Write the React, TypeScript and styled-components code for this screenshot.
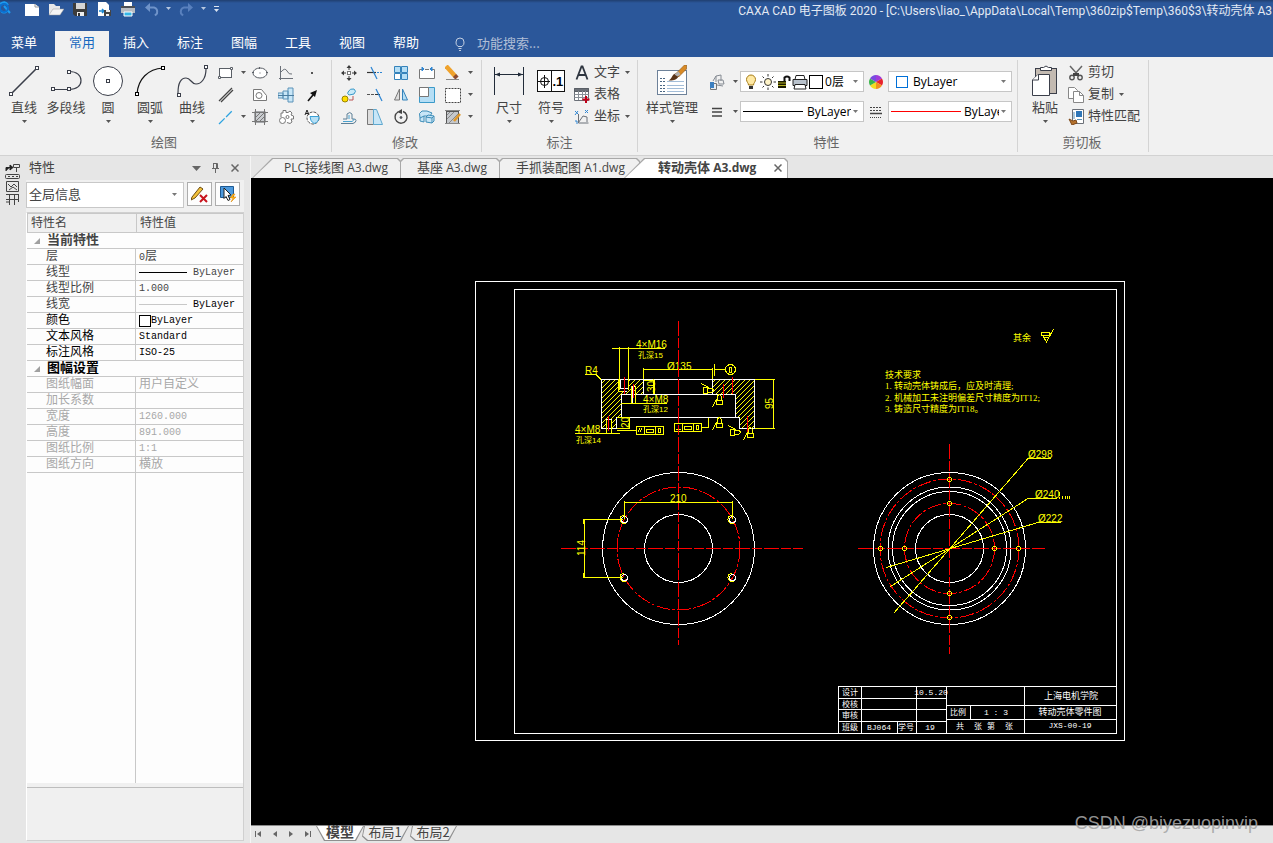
import React from "react";
import styled, { createGlobalStyle, css } from "styled-components";

const ui = `"Noto Sans CJK SC", sans-serif`;
const latinUi = `"Open Sans", "Noto Sans CJK SC", sans-serif`;

const GlobalStyle = createGlobalStyle`
  * { box-sizing: border-box; }
  body { margin: 0; background: #e6e6e6; font-family: ${ui}; font-size: 13px; color: #444; }
  button, select, input { font: inherit; color: inherit; margin: 0; padding: 0; border: 0; background: none; }
  button { cursor: default; white-space: nowrap; }
`;

/* ---------- shell ---------- */

const Window = styled.div`
  position: relative;
  display: flex;
  flex-direction: column;
  min-height: 100vh;
  overflow: hidden;
`;

const Header = styled.header`
  background: linear-gradient(#203f70, #2b579a 3px);
  color: #fff;
`;

const TitleBar = styled.div`
  display: flex;
  align-items: flex-start;
  height: 31px;
  overflow: hidden;
`;

const QuickAccess = styled.div`
  display: flex;
  align-items: center;
  height: 18px;
  flex: none;
`;

const QuickButton = styled.button<{ $w?: number }>`
  display: flex;
  align-items: center;
  justify-content: center;
  width: ${(p) => p.$w ?? 24}px;
  height: 18px;
  flex: none;
`;

const Han = styled.span`
  font-family: ${ui};
  font-size: 13px;
`;

const WindowTitle = styled.div`
  margin-left: auto;
  padding-right: 1px;
  flex: none;
  white-space: nowrap;
  line-height: 22px;
  font-size: 12px;
  font-family: Roboto, "Noto Sans CJK SC", sans-serif;
  color: #e3e9f3;
`;

const MenuBar = styled.nav`
  display: flex;
  height: 26px;
`;

const MenuTab = styled.button<{ $active?: boolean; $first?: boolean }>`
  width: ${(p) => (p.$first ? 48 : 54)}px;
  margin-right: ${(p) => (p.$first ? 7 : 0)}px;
  padding-bottom: 4px;
  line-height: 20px;
  text-align: center;
  background: ${(p) => (p.$active ? "#f1f1f1" : "transparent")};
  color: ${(p) => (p.$active ? "#1769c0" : "#fff")};
`;

const Search = styled.label`
  display: flex;
  align-items: center;
  gap: 10px;
  padding-left: 20px;
`;

const SearchInput = styled.input`
  width: 120px;
  padding-bottom: 4px;
  outline: none;
  &::placeholder { color: #b1bfd6; opacity: 1; }
`;

/* ---------- ribbon ---------- */

const Ribbon = styled.div`
  display: flex;
  height: 99px;
  padding-top: 3px;
  background: #f1f1f1;
  border-bottom: 1px solid #d2d2d2;
`;

const Group = styled.section<{ $pl: number; $pr: number }>`
  display: flex;
  flex-direction: column;
  flex: none;
  height: 92px;
  padding: 0 ${(p) => p.$pr}px 0 ${(p) => p.$pl}px;
  border-right: 1px solid #d4d4d4;
`;

const GroupBody = styled.div`
  display: flex;
  height: 72px;
`;

const GroupLabel = styled.div`
  text-align: center;
  line-height: 20px;
  color: #666;
`;

const BigButton = styled.button<{ $w?: number }>`
  display: flex;
  flex-direction: column;
  align-items: center;
  width: ${(p) => p.$w ?? 42}px;
  padding-top: 5px;
  flex: none;
  line-height: 20px;
`;

const BigLabel = styled.span`
  margin-bottom: 3px;
`;

const SmallGrid = styled.div<{ $pl?: number }>`
  display: flex;
  flex-direction: column;
  padding-top: 2px;
  padding-left: ${(p) => p.$pl ?? 0}px;
`;

const SmallRow = styled.div`
  display: flex;
  height: 22px;
`;

const SmallButton = styled.button<{ $arrow?: boolean }>`
  display: flex;
  align-items: center;
  justify-content: center;
  width: ${(p) => (p.$arrow ? 8 : 26)}px;
  height: 22px;
`;

const TextButton = styled.button`
  display: flex;
  align-items: center;
  height: 22px;
  gap: 4px;
`;

const TextLabel = styled.span`
  line-height: 18px;
  padding-bottom: 4px;
`;

const PropRows = styled.div`
  display: flex;
  flex-direction: column;
  gap: 9px;
  padding-top: 11px;
`;

const PropRow = styled.div`
  display: flex;
  align-items: center;
  height: 21px;
`;

const IconCell = styled.button<{ $w: number }>`
  display: flex;
  align-items: center;
  justify-content: center;
  width: ${(p) => p.$w}px;
`;

const Combo = styled.div<{ $w: number }>`
  display: flex;
  align-items: center;
  width: ${(p) => p.$w}px;
  height: 21px;
  border: 1px solid #c6c6c6;
  background: #fff;
  padding: 0 4px 0 2px;
  gap: 1px;
`;

const ComboSelect = styled.select<{ $pl?: number }>`
  appearance: none;
  flex: 1;
  min-width: 0;
  height: 19px;
  padding-left: ${(p) => p.$pl ?? 0}px;
  outline: none;
  color: #000;
  font-family: ${latinUi};
  font-size: 12px;
`;

const Swatch = styled.span<{ $blue?: boolean; $size: number }>`
  flex: none;
  width: ${(p) => p.$size}px;
  height: ${(p) => p.$size}px;
  margin-left: ${(p) => (p.$blue ? 5 : 0)}px;
  border: 1px solid ${(p) => (p.$blue ? "#0070d8" : "#000")};
  background: #fff;
`;

const LineSample = styled.span<{ $w: number; $color: string }>`
  flex: none;
  width: ${(p) => p.$w}px;
  height: 1px;
  background: ${(p) => p.$color};
`;

/* ---------- workspace ---------- */

const Workspace = styled.div`
  display: flex;
  flex: 1;
  min-height: 687px;
`;

const DockStrip = styled.aside`
  display: flex;
  justify-content: center;
  align-items: flex-start;
  width: 25px;
  flex: none;
  padding-top: 7px;
  background: #e6e6e6;
`;

const Panel = styled.aside`
  display: flex;
  flex-direction: column;
  width: 226px;
  flex: none;
  padding: 0 6px 2px 1px;
  background: #e6e6e6;
  border-right: 1px solid #f5f5f5;
`;

const PanelTitle = styled.div`
  display: flex;
  align-items: center;
  height: 24px;
  padding: 0 0 0 3px;
`;

const PanelTitleText = styled.h2`
  flex: 1;
  margin: 0;
  padding-bottom: 3px;
  line-height: 20px;
  font-size: 13px;
  font-weight: 400;
`;

const PanelTool = styled.button`
  display: flex;
  justify-content: center;
  width: 19px;
`;

const PanelBar = styled.div`
  display: flex;
  gap: 3px;
  padding: 2px 0 4px;
  background: #f0f0f0;
`;

const ScopeCombo = styled.div`
  display: flex;
  align-items: center;
  width: 158px;
  height: 26px;
  padding: 0 5px 0 2px;
  border: 1px solid #c8c8c8;
  background: #fff;
`;

const ScopeSelect = styled.select`
  appearance: none;
  flex: 1;
  min-width: 0;
  padding-bottom: 4px;
  outline: none;
`;

const BarButton = styled.button`
  display: flex;
  align-items: center;
  justify-content: center;
  width: 25px;
  height: 24px;
  border: 1px solid #adadad;
  background: #fdfdfd;
`;

const Sheet = styled.div`
  display: flex;
  flex-direction: column;
  flex: 1;
  border: 1px solid #d0d0d0;
  border-left: 1px solid #fff;
  background: #f0f0f0;
`;

const GridArea = styled.div`
  flex: 1;
  display: flex;
  flex-direction: column;
  margin-bottom: 4px;
  background: #fdfdfd;
`;

const PropTable = styled.table`
  width: 100%;
  table-layout: fixed;
  border-collapse: separate;
  border-spacing: 0;
  font-family: "Liberation Mono", "Noto Sans CJK SC", monospace;
  font-size: 12px;
`;

const HeadCell = styled.th<{ $w?: number }>`
  width: ${(p) => (p.$w ? `${p.$w}px` : "auto")};
  height: 20px;
  padding: 2px 3px 0;
  line-height: 16px;
  font-weight: 400;
  text-align: left;
  background: #f0f0f0;
  border: 1px solid #c8c8c8;
  border-right: 0;
`;

type Tone = "normal" | "strong" | "muted";
const toneColor: Record<Tone, string> = { normal: "#444", strong: "#000", muted: "#a8a8a8" };

const GroupCell = styled.td<{ $tone: Tone }>`
  height: 16px;
  padding: 0 0 0 7px;
  line-height: 15px;
  font-weight: 700;
  font-size: 13px;
  color: ${(p) => toneColor[p.$tone]};
  border-bottom: 1px solid #c8c8c8;
`;

const GroupInner = styled.span`
  display: flex;
  align-items: center;
  gap: 7px;
  height: 15px;
`;

const cell = css<{ $tone: Tone }>`
  height: 16px;
  line-height: 15px;
  font-weight: 400;
  text-align: left;
  white-space: nowrap;
  color: ${(p) => toneColor[p.$tone]};
  border-bottom: 1px solid #c8c8c8;
`;

const NameCell = styled.th<{ $tone: Tone }>`
  ${cell}
  padding: 0 0 0 19px;
  border-right: 1px solid #c8c8c8;
`;

const ValueCell = styled.td<{ $tone: Tone }>`
  ${cell}
  padding: 0 0 0 3px;
`;

const ValueInner = styled.span<{ $text?: boolean }>`
  display: flex;
  align-items: center;
  height: 15px;
  padding-top: ${(p) => (p.$text ? 2 : 0)}px;
`;

const Mono = styled.span<{ $strong?: boolean }>`
  font-size: 10px;
  color: ${(p) => (p.$strong ? "#000" : "inherit")};
`;

const ColumnTail = styled.div`
  flex: 1;
  width: 109px;
  border-right: 1px solid #c8c8c8;
`;

const Description = styled.div`
  height: 53px;
  border-top: 1px solid #bdbdbd;
`;

const Documents = styled.main`
  display: flex;
  flex-direction: column;
  flex: 1;
  min-width: 0;
`;

const DocTabs = styled.div`
  display: flex;
  align-items: flex-end;
  height: 22px;
  padding-left: 1px;
  background: #e6e6e6;
`;

const DocTab = styled.div<{ $w: number; $active?: boolean; $slant: number; $overlap?: number }>`
  position: relative;
  isolation: isolate;
  display: flex;
  align-items: center;
  width: ${(p) => p.$w}px;
  height: 20px;
  margin-left: ${(p) => -(p.$overlap ?? 0)}px;
  flex: none;
  &::before, &::after {
    content: "";
    position: absolute;
    z-index: -1;
    inset: 0;
    background: #a8a8a8;
    clip-path: polygon(${(p) => p.$slant}px 0, calc(100% - 3px) 0, 100% 3px, 100% 100%, 0 100%, 0 ${(p) => (p.$slant > 5 ? "100%" : "3px")});
  }
  &::after {
    inset: 1px 1px 0 1px;
    background: ${(p) => (p.$active ? "#fff" : "#f0f0f0")};
  }
`;

const DocLink = styled.button<{ $pl: number; $active?: boolean }>`
  padding: 0 0 2px ${(p) => p.$pl}px;
  line-height: 18px;
  font-family: ${latinUi};
  font-size: 12px;
  font-weight: ${(p) => (p.$active ? 700 : 400)};
`;

const CloseTab = styled.button`
  display: flex;
  margin-left: auto;
  margin-right: 6px;
`;

const Canvas = styled.div`
  flex: 1;
  min-height: 0;
  background: #000;
  overflow: hidden;
`;

const Drawing = styled.svg`
  display: block;
  width: 100%;
  height: auto;
  shape-rendering: crispEdges;
  fill: none;
`;

const LayoutBar = styled.div`
  display: flex;
  height: 18px;
  background: #e6e6e6;
  border-top: 1px solid #8a8a8a;
`;

const NavButton = styled.button`
  display: flex;
  align-items: center;
  justify-content: center;
  width: 16px;
  height: 16px;
  flex: none;
`;

const LayoutTabs = styled.div`
  display: flex;
  padding-left: 1px;
`;

const LayoutTab = styled.button<{ $active?: boolean; $tuck?: boolean }>`
  position: relative;
  isolation: isolate;
  width: 48px;
  height: 15px;
  margin-left: ${(p) => (p.$tuck ? -3 : 0)}px;
  padding-bottom: 4px;
  line-height: 11px;
  text-align: center;
  font-weight: ${(p) => (p.$active ? 700 : 400)};
  font-size: ${(p) => (p.$active ? 14 : 13)}px;
  &::before, &::after {
    content: "";
    position: absolute;
    z-index: -1;
    inset: 0;
    background: #8f8f8f;
    clip-path: ${(p) =>
      p.$active
        ? "polygon(0 0, 100% 0, calc(100% - 8px) 100%, 8px 100%)"
        : "polygon(3px 0, 100% 0, calc(100% - 8px) 100%, 6px 100%, 1px 70%)"};
  }
  &::after {
    inset: 0 1px 1px 1px;
    background: ${(p) => (p.$active ? "#fff" : "#ececec")};
  }
`;

const Watermark = styled.div`
  position: absolute;
  right: 15px;
  bottom: 9px;
  font-family: "Liberation Sans", sans-serif;
  font-size: 18px;
  line-height: 22px;
  color: rgba(165, 165, 165, 0.9);
`;

/* ---------- icons ---------- */

const Glyph = styled.svg`
  display: block;
  flex: none;
  fill: none;
  stroke: #5a5f66;
  stroke-width: 1;
`;

const I = ({ s = 16, children }: { s?: number; children: React.ReactNode }) => (
  <Glyph width={s} height={s} viewBox={`0 0 ${s} ${s}`} aria-hidden="true">{children}</Glyph>
);

const Arrow = ({ color = "#555" }: { color?: string }) => (
  <Glyph width="7" height="4" viewBox="0 0 7 4" aria-hidden="true">
    <path d="M1 0h5L3.5 3z" fill={color} stroke="none" />
  </Glyph>
);

const Node = ({ x, y, c = "#3b3f4a" }: { x: number; y: number; c?: string }) => (
  <rect x={x - 1.5} y={y - 1.5} width="3" height="3" fill="#fff" stroke={c} />
);

const big = {
  line: <I s={32}><path d="M3 29 29 3" stroke="#3b3f4a" strokeWidth="1.6" /><Node x={3} y={29} /><Node x={29} y={3} /></I>,
  polyline: <I s={32}><path d="M3 24h16c8 0 12-4 12-9s-4-9-12-9" transform="translate(0 .5)" stroke="#3b3f4a" strokeWidth="1.2" /><Node x={3} y={24} /><Node x={19} y={24} /><Node x={19} y={7} /></I>,
  circle: <I s={32}><circle cx="16" cy="16" r="14.5" fill="#fff" stroke="#3b3f4a" /><Node x={16} y={16} /></I>,
  arc: <I s={32}><path d="M3 29C4 14 14 4 29 3" stroke="#111" strokeWidth="1.2" /><Node x={3} y={29} c="#000" /><Node x={29} y={3} c="#000" /></I>,
  curve: <I s={32}><path d="M2 28C2 18 5 13 10 13s5 6 10 6S30 14 30 4" stroke="#3b3f4a" strokeWidth="1.2" /><Node x={3} y={30} /><Node x={30} y={2} /></I>,
  dim: <I s={32}><path d="M1.5 2v28M30.5 2v28M2 9.5h28" stroke="#222c3a" /><path d="M2 9.5l5-2v4zM30 9.5l-5-2v4z" fill="#222c3a" stroke="none" /></I>,
  symbol: (
    <I s={32}>
      <rect x="2.5" y="5.5" width="27" height="21" fill="#fff" stroke="#111" />
      <path d="M16.5 5.5v21M3 16.5h12M9.5 10v13" stroke="#111" />
      <circle cx="9.5" cy="16.5" r="4" stroke="#111" />
      <text x="17.5" y="21" fill="#000" stroke="none" fontSize="13" fontWeight="700" fontFamily="Liberation Sans">.1</text>
    </I>
  ),
  style: (
    <I s={32}>
      <rect x="1.5" y="5.5" width="29" height="24" fill="#fff" stroke="#6d8199" />
      <path d="M4 13.5h5M4 16.5h5M4 20.5h5M4 23.5h5M4 26.5h5" stroke="#4a6784" strokeDasharray="2 1" />
      <path d="M11 16.5h17M11 20.5h17M11 23.5h17M11 26.5h17" stroke="#a3bdd8" />
      <path d="M30.5 0v4l-8 8-3-3 9-9z" fill="#d98a25" stroke="#8a5413" strokeWidth=".6" />
      <path d="m19.5 8.5 3 3c-2 4-6 4-10 4 4-2 3-6 7-7z" fill="#5a3417" stroke="none" />
      <path d="m18.5 9.5 4-3 2 3-3 2z" fill="#b0b0b0" stroke="none" />
    </I>
  ),
  paste: (
    <I s={32}>
      <rect x="6.5" y="3.5" width="21" height="25" fill="#c3bab1" stroke="#3b3f4a" />
      <path d="M11.5 5.5v-3h3q2.5-3 5 0h3v3z" fill="#fff" stroke="#3b3f4a" />
      <path d="M9 9.5h11.5v21h-17V15z" fill="#fff" stroke="#3b3f4a" />
      <path d="M9.5 9.5V15h-6" fill="#fff" stroke="#3b3f4a" />
    </I>
  ),
};

const P = {
  rect: <I><rect x="1.5" y="3.5" width="12" height="9" fill="#fff" /><path d="M.5 11.5h2v2h-2zM12.5 2.5h2v2h-2z" fill="#fff" /></I>,
  ellipse: <I><ellipse cx="8" cy="8" rx="7" ry="5" fill="#fff" /><path d="M0 7.5h2M14 7.5h2M7.5 8h1M7.5 2v2" /></I>,
  chart: <I><path d="M2.5 1v14M1 13.5h14M3 7q4-5 6-1 2 4 5 3" stroke="#6b7078" /></I>,
  dot: <I><path d="M7 7h2v2H7z" fill="#555" stroke="none" /></I>,
  parallel: <I><path d="M1 14 14 1M3 15 15 3" stroke="#444" strokeWidth="1.3" /></I>,
  holeplate: <I><path d="M1.5 2.5h8l5 6v5h-13z" fill="#fff" stroke="#777" /><circle cx="7" cy="8.5" r="3" stroke="#777" /></I>,
  shaft: <I><path d="M0 6h5v5H0zM5 4h5v8H5zM10 1h5v14h-5z" fill="#c8e6f7" stroke="#5a92b8" /><path d="M0 8.5h16" stroke="#4a7c9f" /></I>,
  arrow: <I><path d="m4 14 5-6" stroke="#111" strokeWidth="1.6" /><path d="m13 3-2 7-5-4z" fill="#111" stroke="none" /></I>,
  dashline: <I><path d="M1 15 15 1" stroke="#2da3e0" strokeWidth="1.3" strokeDasharray="8 2" /></I>,
  hatch: <I><rect x="3" y="3" width="10" height="10" fill="#c9ccd0" /><path d="M0 3.5h16M0 12.5h16M3.5 0v16M12.5 0v16M4 12l8-8M4 8l4-4M8 12l4-4" stroke="#777" /></I>,
  gear: <I><path d="M3 8V4h2V1.5h3v2h2l2-1.5 2 2-1 2 2.5 1v3H13l1 3-2 1.5-3-1" stroke="#777" fill="#fff" /><circle cx="4.5" cy="11.5" r="3" stroke="#777" fill="#fff" /><circle cx="9.5" cy="8" r="1.5" stroke="#777" /></I>,
  rotcircle: <I><circle cx="9" cy="9" r="6" fill="#fff" stroke="#555" strokeDasharray="3 1" /><path d="M6 7.5h9q0 6-5 7-4-2-4-7z" fill="#b7e0f5" stroke="#3ba1d6" /><path d="m1 6 2-5 2 5M2 4.5h2" stroke="#222" /></I>,
  move: <I><path d="M8 1v4M8 11v4M1 8h4M11 8h4" stroke="#3a3a3a" /><path d="M8 0l2.5 3h-5zM8 16l2.5-3h-5zM0 8l3-2.5v5zM16 8l-3-2.5v5z" fill="#3a3a3a" stroke="none" /><rect x="6.5" y="6.5" width="3" height="3" fill="#fff" stroke="#777" /></I>,
  trim: <I><path d="M0 7.5h9" stroke="#333" strokeWidth="1.2" /><path d="M10 7.5h6" stroke="#2f86d3" strokeDasharray="2 1" /><path d="m4 2 6 12" stroke="#2f86d3" strokeWidth="1.3" /></I>,
  array: <I><path d="M1.5 1.5h6v6h-6zM8.5 1.5h6v6h-6zM8.5 8.5h6v6h-6z" fill="#b5def5" stroke="#3583bb" /><path d="M1.5 8.5h6v6h-6z" fill="#fff" stroke="#3583bb" /></I>,
  stretchbox: <I><path d="M3 4.5H.5v9h15v-9H13M6 4.5h4" fill="#fff" stroke="#777" /><path d="M3 2v4l2-2zM13 2v4l-2-2z" fill="#2f86d3" stroke="#2f86d3" /></I>,
  pencil: <I><path d="m1 1 9 10" stroke="#efa22c" strokeWidth="4.5" /><path d="m9.5 10.5 2.5 2.5" stroke="#8d4b2f" strokeWidth="4.5" /><path d="M1 14.5h13" stroke="#888" /></I>,
  copyrot: <I><circle cx="4" cy="12" r="3" fill="#ffde00" stroke="#9a8400" /><path d="M7 5q2-4 6-3 3 2 0 5l-5 1q-2-1-1-3z" fill="#c8e9f8" stroke="#3b9ac9" /><path d="M8 13h4V9" stroke="#b55" /></I>,
  extend: <I><path d="M0 7.5h8" stroke="#555" strokeDasharray="3 1" /><path d="M8 7.5h5" stroke="#333" /><path d="m9 2 6 12" stroke="#2f86d3" strokeWidth="1.3" /></I>,
  mirror: <I><path d="M6.5 2v11H1.5z" stroke="#777" fill="#ddd" /><path d="M9.5 2v11h5z" stroke="#3583bb" fill="#b5def5" /></I>,
  scale: <I><path d="M.5.5h15v15H.5z" fill="#b5def5" stroke="#3b9ac9" /><path d="M.5.5h9v9h-9z" fill="#fff" stroke="#777" /></I>,
  marquee: <I><path d="M.5 1.5h15v14H.5z" fill="#fff" stroke="#444" strokeDasharray="2 1" /></I>,
  stamp: <I><path d="M0 14.5h12q3-1 3-3 0-1.5-2-1.5h-2V5q-2-3-5 0v5H2" stroke="#5d7f96" /><path d="M2 12.5h9q2-1 2-2.5M8 10V6" stroke="#49a2cf" /></I>,
  taper: <I><path d="M.5.5h6v15h-6z" fill="#ddd" stroke="#777" /><path d="M6.5.5h3l6 15h-9z" fill="#c8e6f7" stroke="#5fa8cf" /></I>,
  rotate: <I><path d="M10 2.5A6 6 0 1 1 5 3" stroke="#444" strokeWidth="1.4" /><path d="m4 3 5-3v5z" fill="#444" stroke="none" /><circle cx="8" cy="8.5" r="1" fill="#444" /></I>,
  solids: <I><path d="M.5 4.5 3 2h5l5 2-2 3H5L1 9zM1 9v3l4 1V7" fill="#c8e6f7" stroke="#3d8db8" /><path d="M7 8l6 1v5l-6-1zM7 8l2-2 6 1-2 2M15 7v5l-2 2" fill="#c8e6f7" stroke="#3d8db8" /></I>,
  hatchedit: <I><rect x="1.5" y="2.5" width="12" height="12" fill="#c5c8cc" stroke="#555" /><path d="M0 1.5h15M0 14.5h15M2 10l7-7M4 14 13 5M2 6l3-3" stroke="#888" /><path d="m9 12 6-7" stroke="#e0982a" strokeWidth="2.5" /></I>,
  text: <I><path d="M2.5 14.5 7.5 1.5h1l5 13M4.5 10h7" stroke="#2f3640" strokeWidth="1.8" /></I>,
  table: <I><path d="M.5 1.5h14v12H.5z" fill="#fff" stroke="#6b7078" /><path d="M.5 1.5h14v3H.5z" fill="#6b7078" /><path d="M.5 7.5h14M.5 10.5h14M4.5 4v9M8.5 4v9M11.5 4v9" stroke="#8a9098" /><path d="M12 9v7M8.5 12.5h7" stroke="#c00018" strokeWidth="2" /></I>,
  coord: <I><path d="M4.5 5v9h10M4.5 13.5 9 7l4 1v5" stroke="#6b7078" /><path d="m1 2 3 3M4 2 1 6M11 1l3 3M14 1l-3 3M1 12h2v3" stroke="#2f86d3" /></I>,
  cube: <I><path d="M1.5 9.5h6v6h-6z" fill="#e7eef5" stroke="#777" /><path d="M1 8h4v6H1z" fill="#3c7fc0" stroke="none" /><path d="M4 7 7 2l5-1v6M7 2v6M9 6h5l1 4h-5zM8 11l6 1" stroke="#858b93" /></I>,
  lines: <I><path d="M3 4.5h10M3 8h10M3 12h10" stroke="#444" strokeWidth="1.3" /></I>,
  wheel: (
    <I>
      <path d="M8 8V1a7 7 0 0 1 6 3.5z" fill="#a23bd8" stroke="none" />
      <path d="M8 8 14 4.5a7 7 0 0 1 0 7z" fill="#e8222c" stroke="none" />
      <path d="M8 8l6 3.5A7 7 0 0 1 8 15z" fill="#f2901d" stroke="none" />
      <path d="M8 8v7a7 7 0 0 1-6-3.5z" fill="#f3dd22" stroke="none" />
      <path d="M8 8 2 11.5a7 7 0 0 1 0-7z" fill="#39b54a" stroke="none" />
      <path d="M8 8 2 4.5A7 7 0 0 1 8 1z" fill="#7a4be0" stroke="none" />
    </I>
  ),
  weights: <I><path d="M2 3.5h12M2 6.5h12" stroke="#444" strokeDasharray="2 1" /><path d="M2 9.5h12" stroke="#444" strokeWidth="1.5" /><path d="M2 13.5h12" stroke="#444" strokeWidth="1" strokeDasharray="1 1" /></I>,
  bulb: <I><path d="M5.5 11C5.5 9 3.5 8 3.5 5.5a4.5 4.5 0 0 1 9 0C12.5 8 10.5 9 10.5 11z" fill="#ffe9a3" stroke="#a67b16" /><path d="M6 12h4v3H6z" fill="#333" stroke="none" /></I>,
  sun: <I><circle cx="8" cy="8" r="3.5" fill="#fff4c8" stroke="#333" /><path d="M8 0v2.5M8 13.5V16M0 8h2.5M13.5 8H16M2.5 2.5l1.5 1.5M12 12l1.5 1.5M13.5 2.5 12 4M4 12l-1.5 1.5" stroke="#333" /></I>,
  lock: <I s={14}><path d="M1 6h8v7H1z" fill="#1a1a00" stroke="none" /><path d="M1 8h8M1 10.5h8" stroke="#b5b021" /><path d="M7.5 6V2.5q2.5-2 5 0V6" stroke="#111" strokeWidth="2" /></I>,
  printer: <I><path d="M4 1.5h8l1 4H3z" fill="#fff" stroke="#222" /><path d="M1 5.5h14v6H1z" fill="#b9c2cc" stroke="#222" /><path d="M3 10.5h10l1 4.5H2z" fill="#fff" stroke="#222" /></I>,
  cut: <I><path d="m2 1 8 9M14 1 6 10" stroke="#666" strokeWidth="1.5" /><circle cx="4" cy="12.5" r="2.2" stroke="#555" strokeWidth="1.4" /><circle cx="12" cy="12.5" r="2.2" stroke="#555" strokeWidth="1.4" /><path d="M5 8h6v3H5z" fill="#444" stroke="none" /></I>,
  copy: <I><path d="M.5.5h6l3 3v8h-9z" fill="#fff" stroke="#888" /><path d="M5.5 4.5h6l4 4v7h-10z" fill="#fff" stroke="#888" /><path d="M11.5 4.5v4h4" stroke="#888" /></I>,
  match: <I><path d="M4.5.5h11v14h-11z" fill="#fff" stroke="#6b7078" /><path d="M8 2h6v6H8z" fill="#2f76b8" stroke="none" /><path d="M6 3v7M9 10.5h5" stroke="#5a92b8" /><path d="m1 10 4 2 3-1 1 3-5 2z" fill="#b5722d" stroke="#7c481a" /></I>,
};

const Small = ({ icon, label }: { icon: React.ReactNode; label: string }) => (
  <SmallButton aria-label={label}>{icon}</SmallButton>
);
const More = ({ label }: { label: string }) => (
  <SmallButton $arrow aria-label={`${label}选项`}><Arrow /></SmallButton>
);
const Big = ({ icon, label, w, menu = true }: { icon: React.ReactNode; label: string; w?: number; menu?: boolean }) => (
  <BigButton $w={w}>
    {icon}
    <BigLabel>{label}</BigLabel>
    {menu && <Arrow />}
  </BigButton>
);
const Labeled = ({ icon, label, menu }: { icon: React.ReactNode; label: string; menu?: boolean }) => (
  <TextButton>
    {icon}
    <TextLabel>{label}</TextLabel>
    {menu && <Arrow />}
  </TextButton>
);

/* ---------- drawing ---------- */

const Y = "#ffff00";
const W = "#ffffff";
const R = "#ff0000";

const CadText = styled.text<{ $small?: boolean }>`
  font-family: "Liberation Sans", "Noto Sans CJK SC", sans-serif;
  font-size: ${(p) => (p.$small ? 8 : 10)}px;
  fill: ${Y};
`;

const NoteText = styled.text<{ $white?: boolean }>`
  font-family: "Liberation Serif", "Noto Sans CJK SC", serif;
  font-size: 9px;
  fill: ${(p) => (p.$white ? W : Y)};
`;

const BlockText = styled.text`
  font-family: "Liberation Mono", "Noto Sans CJK SC", monospace;
  font-size: 8px;
  fill: ${W};
  text-anchor: middle;
`;

const CenterLine = ({ d }: { d: string }) => <path d={d} stroke={R} strokeDasharray="15 2 10 2" />;

const Rough = ({ x, y, r = 0 }: { x: number; y: number; r?: number }) => (
  <path transform={`translate(${x} ${y}) rotate(${r})`} d="M-2.5.5h6v4h-6zM-1.5 0v-3l1-3M2.5 0v-3l-2-3M-2.5-1l-4 8" stroke={Y} />
);

const boltHoles = [[624, 519], [732, 519], [624, 577], [732, 577]];
const pinHoles = [[949, 479], [949, 503], [949, 593], [949, 617], [880, 548], [904, 548], [994, 548], [1018, 548]];

const SectionView = () => (
  <g>
    <path d="M601 379h42v15h-22v23h-5v11h-15z" fill="url(#hatch)" />
    <path d="M712 379h42v49h-15v-11h-4v-23h-23z" fill="url(#hatch)" />
    <path d="M619 380h10v11h-10zM606 420h5v8h-5z" fill="#000" />
    <g stroke={W}>
      <path d="M601.5 379.5h153v49h-15v-11h-123v11h-15z" />
      <path d="M643.5 379.5v15M712.5 379.5v15M621.5 417.5v-23h114v23" />
      <path d="M620.5 380v8h8v-8M622.5 391.5h4M606.5 428v-9h5v9M632.5 403v-17h3v17" />
    </g>
    <g stroke={Y}>
      <path d="M611.5 348.5h53M619.5 347v43M628.5 347v43M618.5 379v12h4" />
      <path d="M643.5 379v-11M712.5 379v-11M643.5 369.5h69M714.5 364v12M715 369.5h10" />
      <circle cx="730.5" cy="369.5" r="5" />
      <path d="M729.5 367.5h2v5h-2z" />
      <path d="M585 374.5h11l5 5M644 380h10v14M653.5 379v15M755 379.5h20M755 428.5h20M773.5 379v49" />
      <path d="M621 403.5h46M631.5 386v17M635.5 386v17M575 433.5h45M606.5 420v14M611.5 420v14M629.5 417v11M617 417.5h13M617 428.5h13" />
      <path d="M617 430.5h19M636.5 426.5h27v8h-27zM644.5 426v8M655.5 426v8M646.5 429.5h7v3h-7zM658.5 428.5h2v4h-2zM638 432l2-4M640 432l2-4" />
      <path d="M674.5 423.5h27v8h-27zM682.5 423v8M693.5 423v8M684.5 426.5h7v3h-7zM696.5 425.5h2v4h-2zM676 429.5h5M678.5 425v5M702 427.5h6v-10" />
    </g>
    <Rough x={708} y={390} r={90} />
    <Rough x={719} y={400} />
    <Rough x={719} y={423} />
    <Rough x={735} y={432} r={90} />
    <Rough x={750} y={433} />
    <g stroke={R}>
      <path d="M624.5 377v17M633.5 384v14M608.5 416v15M723.5 384v14M732.5 377v17M747.5 416v16" />
    </g>
    <CadText x="636" y="348">4×M16</CadText>
    <CadText $small x="638" y="358">孔深15</CadText>
    <CadText x="667" y="370">Ø135</CadText>
    <CadText x="585" y="374">R4</CadText>
    <CadText x="643" y="403">4×M8</CadText>
    <CadText $small x="643" y="412">孔深12</CadText>
    <CadText x="575" y="433">4×M8</CadText>
    <CadText $small x="576" y="443">孔深14</CadText>
    <CadText transform="translate(655 392) rotate(-90)">30</CadText>
    <CadText transform="translate(629 428) rotate(-90)">20</CadText>
    <CadText transform="translate(773 409) rotate(-90)">95</CadText>
  </g>
);

const FrontView = () => (
  <g>
    <circle cx="678.5" cy="548.5" r="76" stroke={W} />
    <circle cx="678.5" cy="548.5" r="61.5" stroke={R} strokeDasharray="14 2 3 2" />
    <circle cx="678.5" cy="548.5" r="34" stroke={W} />
    <CenterLine d="M678.5 321v324" />
    <CenterLine d="M561 548.5h242" />
    {boltHoles.map(([x, y]) => (
      <g key={`${x}-${y}`}>
        <circle cx={x} cy={y + 0.5} r="4" stroke={Y} strokeDasharray="18 7" />
        <circle cx={x + 0.5} cy={y + 0.5} r="3" stroke={W} />
      </g>
    ))}
    <path d="M624.5 519v-18M732.5 519v-18M624 502.5h108M623 519.5h-40M623 577.5h-40M584.5 520v57M583.5 520v4M583.5 577v-4" stroke={Y} />
    <CadText x="670" y="502">210</CadText>
    <CadText transform="translate(585 556) rotate(-90)">114</CadText>
  </g>
);

const RearView = () => (
  <g>
    {[76, 61.5, 57, 34].map((r) => <circle key={r} cx="949.5" cy="548.5" r={r} stroke={W} />)}
    {[69.5, 45].map((r) => <circle key={r} cx="949.5" cy="548.5" r={r} stroke={R} strokeDasharray="14 2 3 2" />)}
    <CenterLine d="M949.5 444v210" />
    <CenterLine d="M858 548.5h187" />
    {pinHoles.map(([x, y]) => <circle key={`${x}-${y}`} cx={x + 0.5} cy={y + 0.5} r="2" stroke={Y} />)}
    <path d="M893.5 613.5 1028 458.5h23M890.5 586.5 1028 498.5h29M886.5 567.5 1038 522.5h23" stroke={Y} />
    <CadText x="1028" y="458">Ø298</CadText>
    <CadText x="1035" y="498">Ø240</CadText>
    <path d="M1059.5 492v4M1059.5 497v2M1062.5 496v3M1065.5 496v3M1067.5 496v3M1069.5 496v3" stroke={Y} />
    <CadText x="1038" y="522">Ø222</CadText>
  </g>
);

const TitleBlock = () => (
  <g>
    <path
      stroke={W}
      d="M838.5 733.5v-47h278M861.5 686v47M916.5 686v47M946.5 686v47M1024.5 686v47M838 698.5h108M838 709.5h108M838 721.5h108M897.5 721v12M946 705.5h170M946 719.5h170M970.5 705v14"
    />
    <BlockText x="850" y="695">设计</BlockText>
    <BlockText x="850" y="707">校核</BlockText>
    <BlockText x="850" y="718">审核</BlockText>
    <BlockText x="850" y="730">班级</BlockText>
    <BlockText x="931" y="695">10.5.20</BlockText>
    <BlockText x="879" y="730">BJ064</BlockText>
    <BlockText x="906" y="730">学号</BlockText>
    <BlockText x="930" y="730">19</BlockText>
    <BlockText x="958" y="715">比例</BlockText>
    <BlockText x="996" y="715">1 : 3</BlockText>
    <BlockText x="960" y="729">共</BlockText>
    <BlockText x="978" y="729">张</BlockText>
    <BlockText x="991" y="729">第</BlockText>
    <BlockText x="1009" y="729">张</BlockText>
    <NoteText $white textAnchor="middle" x="1071" y="699">上海电机学院</NoteText>
    <NoteText $white textAnchor="middle" x="1070" y="715">转动壳体零件图</NoteText>
    <BlockText x="1070" y="728">JXS-00-19</BlockText>
  </g>
);

const CadDrawing = () => (
  <Drawing viewBox="251 178 1022 647" role="img" aria-label="转动壳体零件图">
    <defs>
      <pattern id="hatch" width="5" height="5" patternUnits="userSpaceOnUse">
        <path d="M-1 6 6-1M-1 1 1-1M4 6 6 4" stroke={Y} strokeWidth="1" />
      </pattern>
    </defs>
    <path d="M475.5 281.5h649v459h-649zM514.5 289.5h602v444h-602z" stroke={W} />
    <SectionView />
    <FrontView />
    <RearView />
    <NoteText x="1013" y="341">其余</NoteText>
    <path d="M1041.5 332.5h8v3h-8zM1043 336l3.5 6 7-13M1044 337.5h5" stroke={Y} />
    <NoteText x="885" y="378">技术要求</NoteText>
    <NoteText x="885" y="389">1. 转动壳体铸成后，应及时清理;</NoteText>
    <NoteText x="885" y="401">2. 机械加工未注明偏差尺寸精度为IT12;</NoteText>
    <NoteText x="885" y="412">3. 铸造尺寸精度为IT18。</NoteText>
    <TitleBlock />
  </Drawing>
);

/* ---------- property data ---------- */

type Prop = { name: string; value?: React.ReactNode; tone: Tone; text?: boolean };

const current: Prop[] = [
  { name: "层", value: <><Mono>0</Mono>层</>, tone: "normal", text: true },
  { name: "线型", value: <><LineSample $w={48} $color="#000" /><Mono>&nbsp;ByLayer</Mono></>, tone: "normal" },
  { name: "线型比例", value: <Mono>1.000</Mono>, tone: "normal" },
  { name: "线宽", value: <><LineSample $w={48} $color="#c8c8c8" /><Mono $strong>&nbsp;ByLayer</Mono></>, tone: "normal" },
  { name: "颜色", value: <><Swatch $size={12} /><Mono>ByLayer</Mono></>, tone: "strong" },
  { name: "文本风格", value: <Mono>Standard</Mono>, tone: "strong" },
  { name: "标注风格", value: <Mono>ISO-25</Mono>, tone: "strong" },
];

const sheet: Prop[] = [
  { name: "图纸幅面", value: "用户自定义", tone: "muted", text: true },
  { name: "加长系数", tone: "muted" },
  { name: "宽度", value: <Mono>1260.000</Mono>, tone: "muted" },
  { name: "高度", value: <Mono>891.000</Mono>, tone: "muted" },
  { name: "图纸比例", value: <Mono>1:1</Mono>, tone: "muted" },
  { name: "图纸方向", value: "横放", tone: "muted", text: true },
];

const PropGroup = ({ title, tone, rows }: { title: string; tone: Tone; rows: Prop[] }) => (
  <tbody>
    <tr>
      <GroupCell colSpan={2} $tone={tone}>
        <GroupInner>
          <Glyph width="6" height="6" viewBox="0 0 6 6" aria-hidden="true"><path d="M6 0v6H0z" fill="#a0a0a0" stroke="none" /></Glyph>
          {title}
        </GroupInner>
      </GroupCell>
    </tr>
    {rows.map((r) => (
      <tr key={r.name}>
        <NameCell scope="row" $tone={r.tone}><ValueInner $text>{r.name}</ValueInner></NameCell>
        <ValueCell $tone={r.tone}><ValueInner $text={r.text}>{r.value}</ValueInner></ValueCell>
      </tr>
    ))}
  </tbody>
);

const CloseGlyph = () => (
  <Glyph width="8" height="8" viewBox="0 0 8 8" aria-hidden="true">
    <path d="m.5.5 7 7M7.5.5l-7 7" stroke="#666" strokeWidth="1.5" />
  </Glyph>
);

const menus = ["常用", "插入", "标注", "图幅", "工具", "视图", "帮助"];

export default function App() {
  return (
    <Window>
      <GlobalStyle />
      <Header>
        <TitleBar>
          <QuickAccess>
            <QuickButton $w={20} aria-label="CAXA">
              <I s={20}><path d="M0 5q5-4 8 1M1 12q3 3 6 0M4 7l6 7" stroke="#1d9bf0" strokeWidth="2" /><circle cx="4" cy="9" r="4" stroke="#0b6fd0" strokeWidth="2" /></I>
            </QuickButton>
            <QuickButton aria-label="新建"><I><path d="M1 3h10l4 3v9H1z" fill="#fff" stroke="none" /><path d="M11 3v3h4" stroke="#999" /></I></QuickButton>
            <QuickButton aria-label="打开"><I><path d="M1 14V3h5l2 2h4v3" fill="#e8e8e8" stroke="none" /><path d="M1 14 5 8h11l-4 6z" fill="#f5f5f5" stroke="#999" strokeWidth=".5" /></I></QuickButton>
            <QuickButton aria-label="保存"><I><path d="M1 2h14v13H3l-2-2z" fill="#3c3c3c" stroke="none" /><path d="M4 2h9v6H4z" fill="#d5d5d5" stroke="none" /><path d="M5 11h7v4H5z" fill="#eee" stroke="none" /><path d="M6 12h2v3H6z" fill="#333" stroke="none" /></I></QuickButton>
            <QuickButton aria-label="另存为"><I><path d="M2 1h8l3 3v11H2z" fill="#fff" stroke="none" /><path d="M3 10h5M6 8l2 2-2 2" stroke="#1c86d1" strokeWidth="1.5" /><path d="M8 9h7v6H8z" fill="#444" stroke="none" /><path d="M10 9h4v2h-4zM10 13h3v2h-3z" fill="#eee" stroke="none" /></I></QuickButton>
            <QuickButton aria-label="打印"><I><path d="M4 1h8v5H4z" fill="#fff" stroke="none" /><path d="M1 5h14v7H1z" fill="#b8bcc2" stroke="none" /><path d="M1 5h14v2H1z" fill="#4b4f55" stroke="none" /><path d="M4 11h8v4H4z" fill="#35b7e8" stroke="#fff" /></I></QuickButton>
            <QuickButton aria-label="撤销"><I><path d="M3 6.5h7q4 1 3 6l-2 2" stroke="#6f93c9" strokeWidth="2" /><path d="M1 6.5 6 2v9z" fill="#6f93c9" stroke="none" /></I></QuickButton>
            <QuickButton $w={8} aria-label="撤销列表"><Arrow color="#b8c8e0" /></QuickButton>
            <QuickButton $w={27} aria-label="恢复"><I><path d="M13 6.5H6q-4 1-3 6l2 2" stroke="#5980bd" strokeWidth="2" /><path d="M15 6.5 10 2v9z" fill="#5980bd" stroke="none" /></I></QuickButton>
            <QuickButton $w={8} aria-label="恢复列表"><Arrow color="#b8c8e0" /></QuickButton>
            <QuickButton $w={20} aria-label="自定义"><I s={8}><path d="M1 1.5h5" stroke="#dce5f2" /><path d="M1 4h5L3.5 7z" fill="#dce5f2" stroke="none" /></I></QuickButton>
          </QuickAccess>
          <WindowTitle>CAXA CAD 电子图板 2020 - [C:\Users\liao_\AppData\Local\Temp\360zip$Temp\360$3\转动壳体 A3</WindowTitle>
        </TitleBar>
        <MenuBar>
          <MenuTab $first>菜单</MenuTab>
          {menus.map((m, i) => <MenuTab key={m} $active={i === 0}>{m}</MenuTab>)}
          <Search>
            <I s={14}><path d="M5 9.5Q2.5 7.5 3 5a4 4 0 0 1 8 0q.5 2.5-2 4.5zM5.5 11.5h3M6 13.5h2" stroke="#c3cfe2" /></I>
            <SearchInput placeholder="功能搜索..." aria-label="功能搜索" />
          </Search>
        </MenuBar>
      </Header>

      <Ribbon>
        <Group $pl={3} $pr={6}>
          <GroupBody>
            <Big icon={big.line} label="直线" />
            <Big icon={big.polyline} label="多段线" menu={false} />
            <Big icon={big.circle} label="圆" />
            <Big icon={big.arc} label="圆弧" />
            <Big icon={big.curve} label="曲线" />
            <SmallGrid>
              <SmallRow><Small icon={P.rect} label="矩形" /><More label="矩形" /><Small icon={P.ellipse} label="椭圆" /><Small icon={P.chart} label="公式曲线" /><Small icon={P.dot} label="点" /></SmallRow>
              <SmallRow><Small icon={P.parallel} label="平行线" /><SmallButton as="span" $arrow /><Small icon={P.holeplate} label="局部放大" /><Small icon={P.shaft} label="孔轴" /><Small icon={P.arrow} label="箭头" /></SmallRow>
              <SmallRow><Small icon={P.dashline} label="中心线" /><More label="中心线" /><Small icon={P.hatch} label="剖面线" /><Small icon={P.gear} label="齿轮" /><Small icon={P.rotcircle} label="圆弧拟合" /></SmallRow>
            </SmallGrid>
          </GroupBody>
          <GroupLabel>绘图</GroupLabel>
        </Group>

        <Group $pl={4} $pr={7}>
          <GroupBody>
            <SmallGrid>
              <SmallRow><Small icon={P.move} label="平移" /><Small icon={P.trim} label="裁剪" /><Small icon={P.array} label="阵列" /><Small icon={P.stretchbox} label="打断" /><Small icon={P.pencil} label="删除" /><More label="删除" /></SmallRow>
              <SmallRow><Small icon={P.copyrot} label="平移复制" /><Small icon={P.extend} label="延伸" /><Small icon={P.mirror} label="镜像" /><Small icon={P.scale} label="缩放" /><Small icon={P.marquee} label="分解" /><More label="分解" /></SmallRow>
              <SmallRow><Small icon={P.stamp} label="等距线" /><Small icon={P.taper} label="拉伸" /><Small icon={P.rotate} label="旋转" /><Small icon={P.solids} label="块" /><Small icon={P.hatchedit} label="填充编辑" /><More label="填充编辑" /></SmallRow>
            </SmallGrid>
          </GroupBody>
          <GroupLabel>修改</GroupLabel>
        </Group>

        <Group $pl={6} $pr={6}>
          <GroupBody>
            <Big icon={big.dim} label="尺寸" />
            <Big icon={big.symbol} label="符号" />
            <SmallGrid $pl={2}>
              <Labeled icon={P.text} label="文字" menu />
              <Labeled icon={P.table} label="表格" />
              <Labeled icon={P.coord} label="坐标" menu />
            </SmallGrid>
          </GroupBody>
          <GroupLabel>标注</GroupLabel>
        </Group>

        <Group $pl={3} $pr={5}>
          <GroupBody>
            <Big icon={big.style} label="样式管理" w={62} />
            <PropRows>
              <PropRow>
                <IconCell $w={27} aria-label="图层">{P.cube}</IconCell>
                <IconCell $w={10} aria-label="图层选项"><Arrow /></IconCell>
                <Combo $w={124}>
                  {P.bulb}{P.sun}{P.lock}{P.printer}
                  <Swatch $size={14} />
                  <ComboSelect $pl={1} aria-label="图层"><option>0层</option></ComboSelect>
                  <Arrow color="#777" />
                </Combo>
                <IconCell $w={24} aria-label="颜色">{P.wheel}</IconCell>
                <Combo $w={124}>
                  <Swatch $blue $size={12} />
                  <ComboSelect $pl={4} aria-label="颜色"><option>ByLayer</option></ComboSelect>
                  <Arrow color="#777" />
                </Combo>
              </PropRow>
              <PropRow>
                <IconCell $w={27} aria-label="线宽">{P.lines}</IconCell>
                <IconCell $w={10} aria-label="线宽选项"><Arrow /></IconCell>
                <Combo $w={124}>
                  <LineSample $w={60} $color="#000" />
                  <ComboSelect $pl={3} aria-label="线宽"><option>ByLayer</option></ComboSelect>
                  <Arrow color="#777" />
                </Combo>
                <IconCell $w={24} aria-label="线型">{P.weights}</IconCell>
                <Combo $w={124}>
                  <LineSample $w={70} $color="#ff0000" />
                  <ComboSelect $pl={2} aria-label="线型"><option>ByLayer</option></ComboSelect>
                  <Arrow color="#777" />
                </Combo>
              </PropRow>
            </PropRows>
          </GroupBody>
          <GroupLabel>特性</GroupLabel>
        </Group>

        <Group $pl={6} $pr={8}>
          <GroupBody>
            <Big icon={big.paste} label="粘贴" />
            <SmallGrid $pl={2}>
              <Labeled icon={P.cut} label="剪切" />
              <Labeled icon={P.copy} label="复制" menu />
              <Labeled icon={P.match} label="特性匹配" />
            </SmallGrid>
          </GroupBody>
          <GroupLabel>剪切板</GroupLabel>
        </Group>
      </Ribbon>

      <Workspace>
        <DockStrip>
          <Glyph width="16" height="44" viewBox="0 0 16 44" aria-hidden="true">
            <path d="M1 8V4.5h4M5 2l3 2.5L5 7z" fill="#222" stroke="#222" />
            <path d="M8.5 1.5h6v3h-6zM11.5 4.5V9" stroke="#444" />
            <rect x=".5" y="11.5" width="14" height="4" rx="1" stroke="#444" />
            <path d="M3 13.5h2M7 13.5h2M11 13.5h2" stroke="#444" />
            <path d="M1.5 18.5h12v10h-12zM3 21l3 3 3-3 3 3M4 27l4-3 4 3" stroke="#444" />
            <path d="M1 31.5h13M4.5 31v11M9.5 31v11M1 36.5h13M13.5 31v8M4.5 39H1" stroke="#444" />
          </Glyph>
        </DockStrip>

        <Panel>
          <PanelTitle>
            <PanelTitleText>特性</PanelTitleText>
            <PanelTool aria-label="菜单"><Glyph width="9" height="5" viewBox="0 0 9 5"><path d="M0 0h9L4.5 5z" fill="#666" stroke="none" /></Glyph></PanelTool>
            <PanelTool aria-label="固定"><Glyph width="9" height="10" viewBox="0 0 9 10"><path d="M2.5.5h4v5M2.5 0v5.5M5.5 1v4M1 5.5h7M4.5 6v4" stroke="#666" /></Glyph></PanelTool>
            <PanelTool aria-label="关闭"><CloseGlyph /></PanelTool>
          </PanelTitle>
          <PanelBar>
            <ScopeCombo>
              <ScopeSelect aria-label="选择范围"><option>全局信息</option></ScopeSelect>
              <Arrow color="#777" />
            </ScopeCombo>
            <BarButton aria-label="清除选择">
              <I s={18}><path d="M1 12 9 2l3 2-8 9-4 2z" fill="#f3c13a" stroke="#6b4d14" /><path d="m9 10 7 7M16 10l-7 7" stroke="#c8141e" strokeWidth="2" /></I>
            </BarButton>
            <BarButton aria-label="快速选择">
              <I s={18}><path d="M1.5 1.5h13v11h-13z" fill="#4d9ade" stroke="#1f5a92" /><path d="m5 3 7 7-3 .5 2 4-2 1-2-4-2 2z" fill="#fff" stroke="#222" /><path d="m14 9-3 4h3l-2 4 5-5h-3l2-3z" fill="#ffb319" stroke="#d98200" strokeWidth=".5" /></I>
            </BarButton>
          </PanelBar>
          <Sheet>
            <GridArea>
              <PropTable>
                <thead>
                  <tr><HeadCell scope="col" $w={109}>特性名</HeadCell><HeadCell scope="col">特性值</HeadCell></tr>
                </thead>
                <PropGroup title="当前特性" tone="normal" rows={current} />
                <PropGroup title="图幅设置" tone="strong" rows={sheet} />
              </PropTable>
              <ColumnTail />
            </GridArea>
            <Description />
          </Sheet>
        </Panel>

        <Documents>
          <DocTabs>
            <DocTab $w={149} $slant={20}><DocLink $pl={32}>PLC<Han>接线图</Han> A3.dwg</DocLink></DocTab>
            <DocTab $w={100} $slant={3} $overlap={1}><DocLink $pl={17}><Han>基座</Han> A3.dwg</DocLink></DocTab>
            <DocTab $w={141} $slant={3} $overlap={1}><DocLink $pl={17}><Han>手抓装配图</Han> A1.dwg</DocLink></DocTab>
            <DocTab $w={164} $slant={20} $overlap={16} $active>
              <DocLink $pl={34} $active><Han>转动壳体</Han> A3.dwg</DocLink>
              <CloseTab aria-label="关闭"><CloseGlyph /></CloseTab>
            </DocTab>
          </DocTabs>
          <Canvas><CadDrawing /></Canvas>
          <LayoutBar>
            <NavButton aria-label="首页"><I s={8}><path d="M.5 1v6" stroke="#666" /><path d="M6 1v6L2 4z" fill="#666" stroke="none" /></I></NavButton>
            <NavButton aria-label="上一页"><I s={8}><path d="M6 1v6L2 4z" fill="#666" stroke="none" /></I></NavButton>
            <NavButton aria-label="下一页"><I s={8}><path d="M2 1v6l4-3z" fill="#666" stroke="none" /></I></NavButton>
            <NavButton aria-label="末页"><I s={8}><path d="M7.5 1v6" stroke="#666" /><path d="M2 1v6l4-3z" fill="#666" stroke="none" /></I></NavButton>
            <LayoutTabs>
              <LayoutTab $active>模型</LayoutTab>
              <LayoutTab $tuck>布局1</LayoutTab>
              <LayoutTab>布局2</LayoutTab>
            </LayoutTabs>
          </LayoutBar>
        </Documents>
      </Workspace>

      <Watermark>CSDN @biyezuopinvip</Watermark>
    </Window>
  );
}
